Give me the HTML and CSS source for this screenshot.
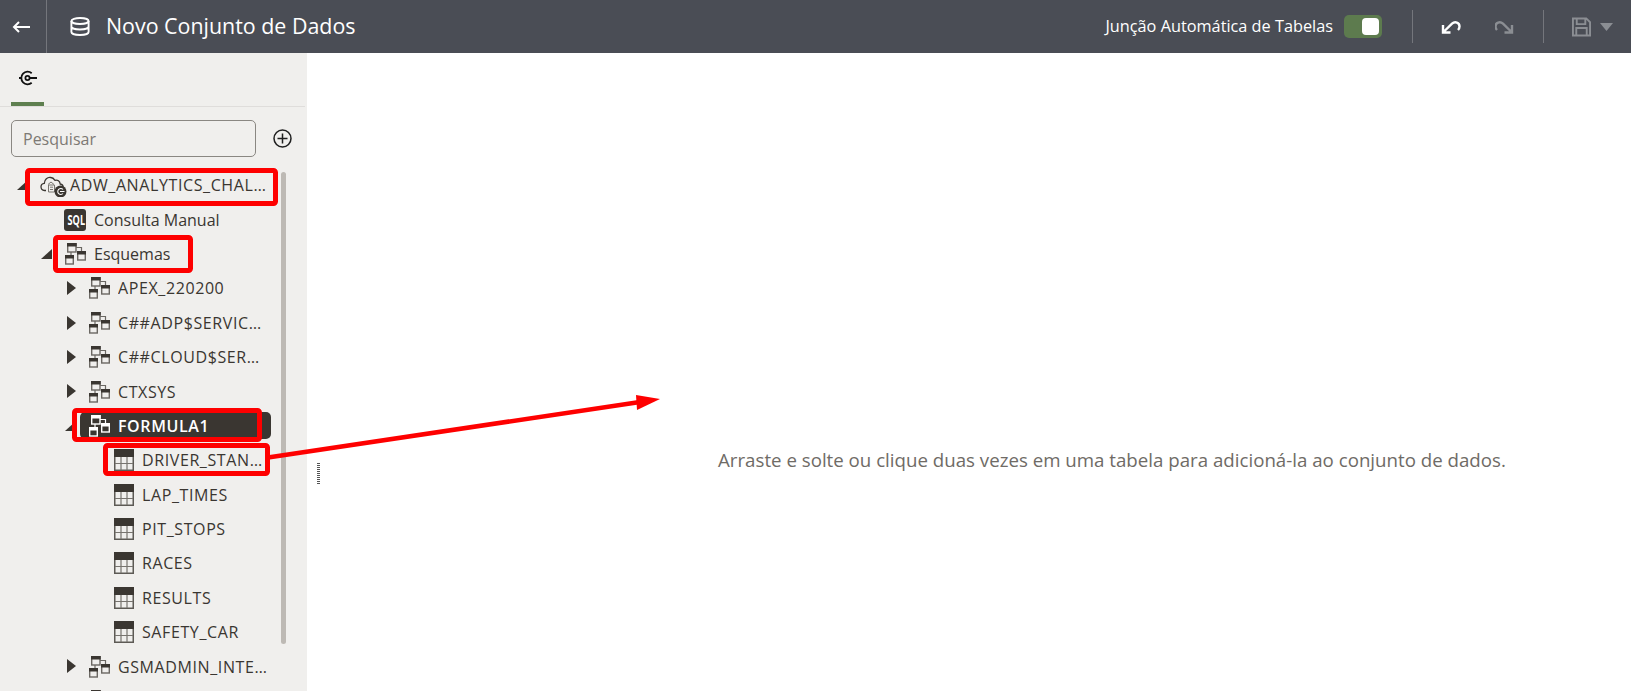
FILE: index.html
```html
<!DOCTYPE html>
<html lang="pt-BR">
<head>
<meta charset="utf-8">
<title>Novo Conjunto de Dados</title>
<link rel="stylesheet" href="styles.css">
</head>
<body>
<svg class="defs" width="0" height="0" aria-hidden="true">
  <symbol id="i-schema" viewBox="0 0 22 22">
    <path class="conn" d="M12 4.500h5.500V8M7 9v3" fill="none"/>
    <g class="tbl"><rect x="3.700" y=".7" width="8.300" height="8.300"/><rect x="3" y="0" width="9.700" height="3.500" class="hd"/></g>
    <g class="tbl"><rect x="13.700" y="8.700" width="7.600" height="8.300"/><rect x="13" y="8" width="9" height="3.500" class="hd"/></g>
    <g class="tbl"><rect x="1.700" y="12.700" width="7.600" height="8.300"/><rect x="1" y="12" width="9" height="3.500" class="hd"/></g>
  </symbol>
  <symbol id="i-table" viewBox="0 0 20 22">
    <rect x=".75" y=".75" width="18.500" height="20.500" fill="#f0efed" stroke="#5d5a55" stroke-width="1.500"/>
    <rect x="0" y="0" width="20" height="8" fill="#3a3631"/>
    <path d="M7 8v13M13 8v13M1 14.500h18" stroke="#77746f" stroke-width="1.200" fill="none"/>
  </symbol>
</svg>

<div class="app">
  <header class="topbar">
    <button class="back" type="button" aria-label="Voltar">
      <svg width="18" height="12" viewBox="0 0 18 12"><path d="M18 6H2M7 1 2 6l5 5" fill="none" stroke="#fff" stroke-width="2"/></svg>
    </button>
    <svg class="db" width="20" height="19" viewBox="0 0 20 19"><g fill="none" stroke="#fff" stroke-width="1.900"><ellipse cx="10" cy="4" rx="8.600" ry="3"/><path d="M1.400 4v11c0 1.700 3.800 3 8.600 3s8.600-1.300 8.600-3V4M1.400 9.500c0 1.700 3.800 3 8.600 3s8.600-1.300 8.600-3"/></g></svg>
    <h1 class="title">Novo Conjunto de Dados</h1>
    <div class="actions">
      <span class="auto">Junção Automática de Tabelas</span>
      <span class="toggle"><span class="knob"></span></span>
      <span class="sep sep-a"></span>
      <svg class="undo" width="20" height="15" viewBox="0 0 20 15"><path d="M3 12.500 11 4.700C14 2 18.500 3.500 18.500 7.500c0 1.500-.5 2.500-1.500 3.500M2 6v7.500h7.500" fill="none" stroke="#fff" stroke-width="2.400"/></svg>
      <svg class="redo" width="19" height="15" viewBox="0 0 19 15"><path d="M16 12.500 8 4.700C5 2 .5 3.500.5 7.500c0 1.500.5 2.500 1.500 3.500M17 6v7.500H9.500" fill="none" stroke="#8b8e93" stroke-width="2.400"/></svg>
      <span class="sep sep-b"></span>
      <svg class="save" width="19" height="20" viewBox="0 0 20 20"><path d="M1 1h14l4 4v14H1zM5 1v6h9V1M4.500 19v-8h11v8" fill="none" stroke="#8b8e93" stroke-width="2"/></svg>
      <svg class="drop" width="13" height="8" viewBox="0 0 13 8"><path d="M0 0h13L6.500 8z" fill="#8b8e93"/></svg>
    </div>
  </header>

  <main class="body">
    <aside class="side">
      <div class="tabs">
        <div class="tab">
          <svg width="20" height="16" viewBox="0 0 20 16"><g fill="none" stroke="#111" stroke-width="1.800"><path d="M13.700 3.200A6.300 6.300 0 1 0 13.700 12.800"/><circle cx="9.500" cy="8" r="2.100"/><path d="M11.600 8H19M1 8h2"/></g></svg>
        </div>
      </div>
      <div class="search">
        <input class="search-in" type="text" placeholder="Pesquisar">
        <svg width="19" height="19" viewBox="0 0 19 19"><g fill="none" stroke="#1f1f1f" stroke-width="1.500"><circle cx="9.500" cy="9.500" r="8.500"/><path d="M9.500 4.500v10M4.500 9.500h10"/></g></svg>
      </div>
      <div class="tree-wrap">
        <ul class="tree">
          <li class="row l0">
            <span class="caret open"></span>
            <span class="node">
              <svg class="ic" width="27" height="24" viewBox="0 0 27 24"><path d="M6 17.500H4.500C2 17.500 1 15.500 1 13.800c0-2 1.500-3.300 3.300-3.500C4.500 6.500 7.500 4 10.500 4.500c2-.1 3.500 1.200 4.500 2.800 2.500-.8 5 .8 5.200 3.700 1.800.3 3 1.500 3 3.200" fill="none" stroke="#3a3631" stroke-width="1.300"/><path d="M8 11.500l3-2.500 3 2.500M8.500 12h6v7h-6zM10 14.200h3M10 16.500h3" fill="none" stroke="#77746f" stroke-width="1"/><circle cx="20.500" cy="18.500" r="6" fill="#3a3631"/><path d="M23 16.500a3 3 0 1 0 0 4M20 18.500h4.500" fill="none" stroke="#fff" stroke-width="1.100"/></svg>
              <span class="lbl up">ADW_ANALYTICS_CHALLENGE</span>
            </span>
          </li>
          <li class="row l1">
            <span class="caret none"></span>
            <span class="node"><span class="sql"><span class="sql-t">SQL</span></span><span class="lbl">Consulta Manual</span></span>
          </li>
          <li class="row l1">
            <span class="caret open"></span>
            <span class="node"><svg class="ic schema"><use href="#i-schema"/></svg><span class="lbl">Esquemas</span></span>
          </li>
          <li class="row l2">
            <span class="caret closed"></span>
            <span class="node"><svg class="ic schema"><use href="#i-schema"/></svg><span class="lbl up">APEX_220200</span></span>
          </li>
          <li class="row l2">
            <span class="caret closed"></span>
            <span class="node"><svg class="ic schema"><use href="#i-schema"/></svg><span class="lbl up lbl-short">C##ADP$SERVICES</span></span>
          </li>
          <li class="row l2">
            <span class="caret closed"></span>
            <span class="node"><svg class="ic schema"><use href="#i-schema"/></svg><span class="lbl up lbl-short">C##CLOUD$SERVICE</span></span>
          </li>
          <li class="row l2">
            <span class="caret closed"></span>
            <span class="node"><svg class="ic schema"><use href="#i-schema"/></svg><span class="lbl up">CTXSYS</span></span>
          </li>
          <li class="row l2 selected">
            <span class="caret open"></span>
            <span class="node"><svg class="ic schema"><use href="#i-schema"/></svg><span class="lbl up">FORMULA1</span></span>
          </li>
          <li class="row l3">
            <span class="caret none"></span>
            <span class="node"><svg class="ic tb"><use href="#i-table"/></svg><span class="lbl up">DRIVER_STANDINGS</span></span>
          </li>
          <li class="row l3">
            <span class="caret none"></span>
            <span class="node"><svg class="ic tb"><use href="#i-table"/></svg><span class="lbl up">LAP_TIMES</span></span>
          </li>
          <li class="row l3">
            <span class="caret none"></span>
            <span class="node"><svg class="ic tb"><use href="#i-table"/></svg><span class="lbl up">PIT_STOPS</span></span>
          </li>
          <li class="row l3">
            <span class="caret none"></span>
            <span class="node"><svg class="ic tb"><use href="#i-table"/></svg><span class="lbl up">RACES</span></span>
          </li>
          <li class="row l3">
            <span class="caret none"></span>
            <span class="node"><svg class="ic tb"><use href="#i-table"/></svg><span class="lbl up">RESULTS</span></span>
          </li>
          <li class="row l3">
            <span class="caret none"></span>
            <span class="node"><svg class="ic tb"><use href="#i-table"/></svg><span class="lbl up">SAFETY_CAR</span></span>
          </li>
          <li class="row l2">
            <span class="caret closed"></span>
            <span class="node"><svg class="ic schema"><use href="#i-schema"/></svg><span class="lbl up">GSMADMIN_INTERNAL</span></span>
          </li>
          <li class="row l2">
            <span class="caret closed"></span>
            <span class="node"><svg class="ic schema"><use href="#i-schema"/></svg><span class="lbl up">LBACSYS</span></span>
          </li>
        </ul>
        <div class="scrollbar"></div>
      </div>
    </aside>
    <section class="canvas">
      <span class="grip"></span>
      <p class="hint">Arraste e solte ou clique duas vezes em uma tabela para adicioná-la ao conjunto de dados.</p>
    </section>
  </main>
</div>

<svg class="notes" width="1631" height="691" viewBox="0 0 1631 691" aria-hidden="true">
  <g fill="none" stroke="#fe0000" stroke-width="5">
    <rect x="27.500" y="170.500" width="248" height="33" rx="2"/>
    <rect x="55.500" y="237.500" width="135" height="33" rx="2"/>
    <rect x="74.500" y="410.500" width="185" height="29" rx="2"/>
    <rect x="105.500" y="445.500" width="162" height="28" rx="2"/>
    <path d="M268 457.500 640 402" stroke-width="4.500"/>
  </g>
  <path d="M636 395 660 399 637 410z" fill="#fe0000"/>
</svg>
</body>
</html>
```
FILE: styles.css
```css
* { box-sizing: border-box; }
html, body { margin: 0; height: 100%; overflow: hidden; }
body { font-family: "Open Sans", "Noto Sans", sans-serif; color: #3a3631; background: #fff; position: relative; }
.defs { position: absolute; }
.app { display: flex; flex-direction: column; height: 691px; }

.topbar { flex: 0 0 53px; display: flex; align-items: center; background: #4a4d55; color: #fff; }
.back { width: 47px; height: 53px; padding: 0 5px 0 0; border: 0; border-right: 1px solid #74767c; background: none; display: flex; align-items: center; justify-content: center; }
.db { margin-left: 23px; margin-bottom: 1px; }
.title { margin: 0 0 0 16px; font-size: 21.400px; font-weight: 400; line-height: 51px; height: 53px; }
.actions { margin-left: auto; display: flex; align-items: center; height: 53px; padding-right: 18px; }
.auto { font-size: 16.300px; margin-bottom: 2px; }
.toggle { margin-left: 11px; width: 38px; height: 23px; border-radius: 5px; background: #5d7b4e; display: flex; align-items: center; justify-content: flex-end; padding-right: 3px; }
.knob { width: 17px; height: 17px; border-radius: 4px; background: #fff; }
.sep { width: 1px; height: 33px; background: #74767c; }
.sep-a { margin-left: 30px; }
.undo { margin-left: 28px; }
.redo { margin-left: 34px; }
.sep-b { margin-left: 29px; }
.save { margin-left: 28px; }
.drop { margin-left: 9px; }

.body { flex: 1; display: flex; min-height: 0; }
.side { flex: 0 0 307px; background: #f0efed; display: flex; flex-direction: column; min-height: 0; overflow: hidden; }
.tabs { height: 54px; flex: none; margin-right: 2px; border-bottom: 1px solid #dfdddb; padding-left: 11px; }
.tab { width: 33px; height: 53px; border-bottom: 4px solid #5e7f4f; display: flex; align-items: center; justify-content: center; padding-top: 1px; padding-left: 1px; }
.search { flex: none; display: flex; align-items: center; margin-top: 13px; padding-left: 11px; }
.search-in { width: 245px; height: 37px; border: 1px solid #8a8782; border-radius: 5px; background: #f0efed; padding: 0 11px; font: 400 16px "Open Sans", "Noto Sans", sans-serif; color: #3a3631; }
.search-in::placeholder { color: #7d7974; opacity: 1; }
.search svg { margin-left: 17px; }

.tree-wrap { flex: 1; min-height: 0; position: relative; margin-top: 11px; }
.tree { list-style: none; margin: 0; padding: 0; width: 271px; }
.row { height: 34.400px; display: flex; align-items: center; font-size: 16px; white-space: nowrap; }
.l0 { padding-left: 16px; }
.l1 { padding-left: 40px; }
.l2 { padding-left: 64px; }
.l3 { padding-left: 88px; }
.caret { flex: 0 0 24px; height: 100%; position: relative; }
.caret.open::before { content: ""; position: absolute; left: 1px; top: 12px; border-style: solid; border-width: 0 0 10px 11px; border-color: transparent transparent #3a3631 transparent; }
.caret.closed::before { content: ""; position: absolute; left: 3px; top: 10px; border-style: solid; border-width: 7px 0 7px 9px; border-color: transparent transparent transparent #3a3631; }
.node { flex: 1; min-width: 0; display: flex; align-items: center; gap: 8px; padding-right: 3px; }
.ic { flex: none; width: 22px; height: 22px; }
.ic.tb { width: 20px; margin-left: 2px; }
.l0 .ic { width: 27px; height: 24px; margin-right: -5px; flex-basis: 27px; }
.lbl { min-width: 0; overflow: hidden; text-overflow: ellipsis; color: #3a3631; }
.up { letter-spacing: .6px; }
.lbl-short { max-width: 145px; }
.sql { flex: none; width: 22px; height: 22px; border-radius: 3px; background: #3a3631; color: #fff; font: 700 13.500px/22px "Open Sans", sans-serif; text-align: center; overflow: hidden; }
.sql-t { display: block; transform: scaleX(.68); }

.schema { --head: #3a3631; --line: #6b6863; --body: #f0efed; }
.selected .schema { --head: #fff; --line: #fff; --body: #3a3631; }
.tbl rect { fill: var(--body); stroke: var(--line); stroke-width: 1.400; }
.tbl rect.hd { fill: var(--head); stroke: none; }
.conn { stroke: var(--line); stroke-width: 1.200; }

.selected .node { margin-left: -8px; padding-left: 8px; height: 27px; background: #3a3631; border-radius: 5px; }
.selected .lbl { color: #fff; font-weight: 600; }

.scrollbar { position: absolute; left: 281px; top: 4px; width: 5px; height: 472px; border-radius: 3px; background: #bdb9b4; }

.canvas { flex: 1; position: relative; padding: 395px 0 0 411px; background: #fff; }
.grip { position: absolute; left: 10px; top: 410px; width: 3px; height: 21px; background: repeating-linear-gradient(to bottom, #555 0 1px, transparent 1px 2px); }
.hint { margin: 0; font-size: 18.700px; line-height: 24px; color: #6f6b66; white-space: nowrap; }

.notes { position: absolute; left: 0; top: 0; pointer-events: none; }
```
